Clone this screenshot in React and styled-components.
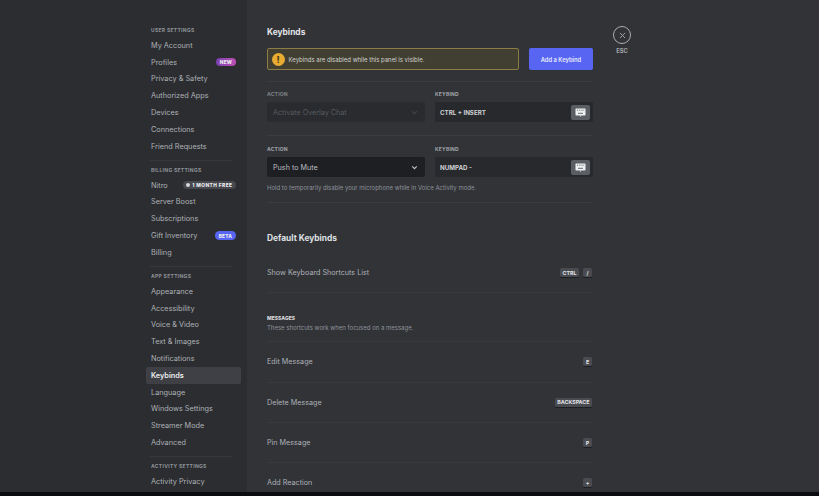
import React from "react";
import styled, { createGlobalStyle } from "styled-components";

const Global = createGlobalStyle`
  html, body { margin: 0; padding: 0; background: #0b0c0d; overflow: hidden; }
  body { font-family: Inter, "Noto Sans", sans-serif; }
  * { box-sizing: border-box; }
`;

const Page = styled.div`
  width: 819px; height: 492px; display: flex; overflow: hidden; background: #313337;
`;
const Sidebar = styled.aside`
  width: 247px; flex: none; background: #2b2d30; padding: 26px 6px 0 146px; overflow: hidden;
`;
const SectionTitle = styled.div`
  height: 8px; line-height: 8px; padding-left: 5px; margin-bottom: 3px;
  font-size: 5px; font-weight: 700; letter-spacing: 0.3px; color: #8f9299; text-transform: uppercase; white-space: nowrap;
`;
const NavItem = styled.div`
  height: 16.8px; display: flex; align-items: center; justify-content: space-between;
  padding: 0 5px; border-radius: 2px; font-size: 7.3px; white-space: nowrap;
  font-weight: ${p => (p.$active ? 600 : 400)};
  color: ${p => (p.$active ? "#eceef0" : "#aeb1b7")};
  background: ${p => (p.$active ? "#3e4045" : "transparent")};
`;
const Divider = styled.div`
  height: 1px; background: #35373b; margin: 5px 9px 5.2px 4px;
`;
const Badge = styled.span`
  display: inline-flex; align-items: center; gap: 2px; height: 8.6px; padding: 0 ${p => (p.$wide ? 3.5 : 4)}px; border-radius: 4.3px;
  font-size: 4.8px; font-weight: 800; color: #eceef0; letter-spacing: ${p => (p.$wide ? 0.45 : 0.15)}px;
  background: ${p => p.$bg};
`;
const BadgeDot = styled.span`
  width: 4px; height: 4px; border-radius: 50%; background: #d8d9dd;
`;
const Main = styled.main`
  flex: 1; min-width: 0; display: flex; padding: 26px 0 0 20px; overflow: hidden;
`;
const Column = styled.div`
  width: 326px; flex: none;
`;
const Heading = styled.h1`
  margin: 0 0 9px; height: 13px; line-height: 13px; font-size: 8.4px; font-weight: 700; color: #e3e4e7;
`;
const NoticeRow = styled.div`
  display: flex; gap: 10px; height: 22px;
`;
const Notice = styled.div`
  flex: 1; display: flex; align-items: center; gap: 4px; padding: 0 3.5px;
  border: 1px solid #8e7c45; border-radius: 2px; background: #413e32;
  font-size: 6px; color: #d2d2cd; white-space: nowrap;
`;
const WarnIcon = styled.span`
  width: 13px; height: 13px; border-radius: 50%; background: #e8ac33; color: #4a3a14;
  display: flex; align-items: center; justify-content: center; font-size: 9px; font-weight: 800; line-height: 1;
`;
const AddButton = styled.button`
  width: 64px; border: 0; border-radius: 2px; background: #5865f2; color: #e6e8fb;
  font: 600 5.8px Inter, sans-serif; padding: 0;
`;
const Rule = styled.div`
  height: 1px; background: #3a3c41; margin-top: ${p => p.$top || 0}px; margin-bottom: ${p => p.$bottom || 0}px;
`;
const BindRow = styled.div`
  display: grid; grid-template-columns: 158px 158px; column-gap: 10px;
`;
const FieldLabel = styled.div`
  height: 7px; line-height: 7px; margin-bottom: 4px; font-size: 5px; font-weight: 700; letter-spacing: 0.2px;
  color: ${p => (p.$dim ? "#7f838a" : "#a2a5ab")};
`;
const Select = styled.div`
  height: 20px; display: flex; align-items: center; justify-content: space-between; padding: 0 6px 0 6px;
  border-radius: 2px; background: ${p => (p.$dim ? "#292b2e" : "#1e1f22")};
  font-size: 7.2px; color: ${p => (p.$dim ? "#585b61" : "#bcbec3")};
`;
const KeyField = styled.div`
  height: 20px; display: flex; align-items: center; justify-content: space-between; padding: 0 3px 0 5px;
  border-radius: 2px; background: #27292c; font-size: 6.2px; font-weight: 700; color: #d0d1d5;
`;
const KeyButton = styled.span`
  width: 19px; height: 15px; border-radius: 2px; background: #5b5e63; display: flex; align-items: center; justify-content: center;
`;
const HelpText = styled.div`
  margin-top: 6px; height: 10px; line-height: 10px; font-size: 6px; color: #8f9299; white-space: nowrap;
`;
const SubHeading = styled.h2`
  margin: 29px 0 0; height: 13px; line-height: 13px; font-size: 8.4px; font-weight: 700; color: #dfe0e3;
`;
const ShortcutRow = styled.div`
  height: 40.3px; display: flex; align-items: center; justify-content: space-between;
  margin-top: ${p => p.$top || 0}px; border-bottom: 1px solid #37393e;
  font-size: 7.2px; color: #aeb1b7;
`;
const Keys = styled.div`
  display: flex; gap: 4px; margin-right: 1px;
`;
const Key = styled.kbd`
  height: 9px; min-width: 9px; padding: 0 2.5px; display: flex; align-items: center; justify-content: center; border-radius: 1.5px;
  background: #494b51; box-shadow: 0 1px 0 #1e1f22; color: #e2e3e6; font: 700 5.3px Inter, sans-serif;
`;
const GroupTitle = styled.div`
  margin-top: 21px; height: 8px; line-height: 8px; font-size: 5px; font-weight: 800; color: #d8d9dc;
`;
const GroupHelp = styled.div`
  height: 10px; line-height: 10px; margin-top: 1px; font-size: 6px; color: #8f9299;
`;
const GroupRule = styled.div`
  height: 1px; background: #37393e; margin-top: 8px;
`;
const CloseColumn = styled.div`
  width: 18px; margin-left: 20px; display: flex; flex-direction: column; align-items: center; gap: 3px;
`;
const CloseCircle = styled.div`
  width: 18px; height: 18px; flex: none; border: 1px solid #a9abb0; border-radius: 50%; display: flex; align-items: center; justify-content: center;
`;
const EscLabel = styled.div`
  font-size: 5.8px; font-weight: 700; color: #a2a5ab;
`;

const KeyboardIcon = () => (
  <svg width="11" height="9" viewBox="0 0 11 9">
    <rect x="0.5" y="0.5" width="10" height="7" rx="0.8" fill="#f0f1f3" />
    <path d="M2 2.2h1.2M4.2 2.2h1.2M6.4 2.2h1.2M8.4 2.2h.8M3 5.3h5" stroke="#5b5e63" strokeWidth="0.9" />
    <path d="M5.5 7.5v1" stroke="#f0f1f3" />
  </svg>
);

const sections = [
  { title: "User Settings", items: [
    ["My Account"], ["Profiles", "NEW", "linear-gradient(90deg,#7a3fb0,#c04fb5)"], ["Privacy & Safety"], ["Authorized Apps"], ["Devices"], ["Connections"], ["Friend Requests"],
  ] },
  { title: "Billing Settings", items: [
    ["Nitro", "1 MONTH FREE", "#46484e", true], ["Server Boost"], ["Subscriptions"], ["Gift Inventory", "BETA", "#5865f2"], ["Billing"],
  ] },
  { title: "App Settings", items: [
    ["Appearance"], ["Accessibility"], ["Voice & Video"], ["Text & Images"], ["Notifications"], ["Keybinds"], ["Language"], ["Windows Settings"], ["Streamer Mode"], ["Advanced"],
  ] },
  { title: "Activity Settings", items: [["Activity Privacy"]] },
];

const shortcuts = [
  ["Edit Message", ["E"]],
  ["Delete Message", ["BACKSPACE"]],
  ["Pin Message", ["P"]],
  ["Add Reaction", ["+"]],
];

export default function App() {
  return (
    <>
      <Global />
      <Page>
        <Sidebar>
          {sections.map((s, i) => (
            <React.Fragment key={s.title}>
              <SectionTitle>{s.title}</SectionTitle>
              {s.items.map(([label, badge, bg, dot]) => (
                <NavItem key={label} $active={label === "Keybinds"}>
                  {label}
                  {badge && <Badge $bg={bg} $wide={dot}>{dot && <BadgeDot />}{badge}</Badge>}
                </NavItem>
              ))}
              {i < sections.length - 1 && <Divider />}
            </React.Fragment>
          ))}
        </Sidebar>
        <Main>
          <Column>
            <Heading>Keybinds</Heading>
            <NoticeRow>
              <Notice><WarnIcon>!</WarnIcon>Keybinds are disabled while this panel is visible.</Notice>
              <AddButton>Add a Keybind</AddButton>
            </NoticeRow>
            <Rule $top={11} $bottom={9} />
            <BindRow>
              <div>
                <FieldLabel $dim>ACTION</FieldLabel>
                <Select $dim>Activate Overlay Chat
                  <svg width="9" height="9" viewBox="0 0 24 24" fill="none" stroke="#45474c" strokeWidth="3"><path d="M6 9l6 6 6-6" /></svg>
                </Select>
              </div>
              <div>
                <FieldLabel>KEYBIND</FieldLabel>
                <KeyField>CTRL + INSERT<KeyButton><KeyboardIcon /></KeyButton></KeyField>
              </div>
            </BindRow>
            <Rule $top={13} $bottom={10} />
            <BindRow>
              <div>
                <FieldLabel>ACTION</FieldLabel>
                <Select>Push to Mute
                  <svg width="9" height="9" viewBox="0 0 24 24" fill="none" stroke="#c3c5ca" strokeWidth="3"><path d="M6 9l6 6 6-6" /></svg>
                </Select>
              </div>
              <div>
                <FieldLabel>KEYBIND</FieldLabel>
                <KeyField>NUMPAD -<KeyButton><KeyboardIcon /></KeyButton></KeyField>
              </div>
            </BindRow>
            <HelpText>Hold to temporarily disable your microphone while in Voice Activity mode.</HelpText>
            <Rule $top={9} />
            <SubHeading>Default Keybinds</SubHeading>
            <ShortcutRow $top={8}>Show Keyboard Shortcuts List<Keys><Key>CTRL</Key><Key>/</Key></Keys></ShortcutRow>
            <GroupTitle>MESSAGES</GroupTitle>
            <GroupHelp>These shortcuts work when focused on a message.</GroupHelp>
            <GroupRule />
            {shortcuts.map(([label, keys]) => (
              <ShortcutRow key={label}>{label}<Keys>{keys.map(k => <Key key={k}>{k}</Key>)}</Keys></ShortcutRow>
            ))}
          </Column>
          <CloseColumn>
            <CloseCircle>
              <svg width="9" height="9" viewBox="0 0 24 24" fill="none" stroke="#a9abb0" strokeWidth="2.4" strokeLinecap="round"><path d="M6 6l12 12M18 6L6 18" /></svg>
            </CloseCircle>
            <EscLabel>ESC</EscLabel>
          </CloseColumn>
        </Main>
      </Page>
    </>
  );
}
